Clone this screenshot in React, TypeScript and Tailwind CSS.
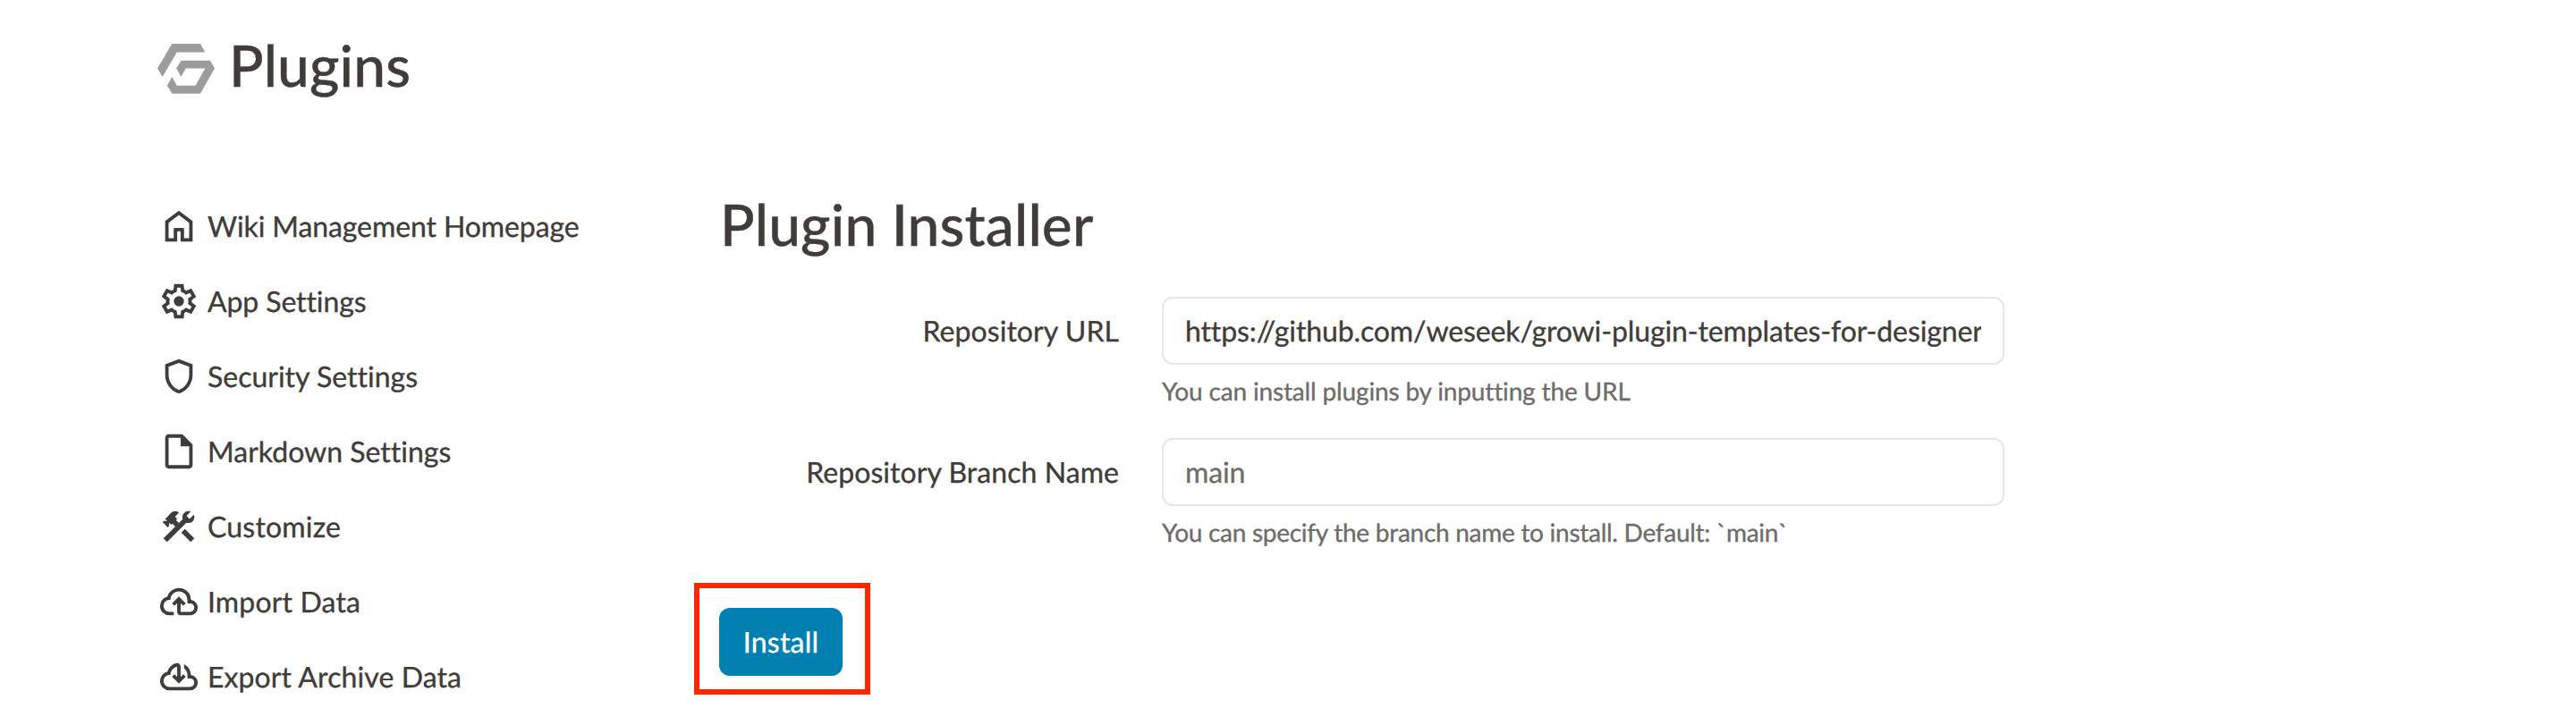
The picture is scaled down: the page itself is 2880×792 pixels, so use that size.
const ICONS = {
  home: "M240-200h120v-240h240v240h120v-360L480-740 240-560v360Zm-80 80v-480l320-240 320 240v480H520v-240h-80v240H160Z",
  settings:
    "m370-80-16-128q-13-5-24.5-12T307-235l-119 50L78-375l103-78q-1-7-1-13.5v-27q0-6.5 1-13.5L78-585l110-190 119 50q11-8 23-15t24-12l16-128h220l16 128q13 5 24.5 12t22.5 15l119-50 110 190-103 78q1 7 1 13.5v27q0 6.5-2 13.5l103 78-110 190-118-50q-11 8-23 15t-24 12L590-80H370Zm70-80h79l14-106q31-8 57.5-23.5T639-327l99 41 39-68-86-65q5-14 7-29.5t2-31.5q0-16-2-31.5t-7-29.5l86-65-39-68-99 42q-22-23-48.5-38.5T533-694l-13-106h-79l-14 106q-31 8-57.5 23.5T321-633l-99-41-39 68 86 64q-5 15-7 30t-2 32q0 16 2 31t7 30l-86 65 39 68 99-42q22 23 48.5 38.5T427-266l13 106Zm40-202q49 0 83.500-34.500T598-480q0-49-34.500-83.500T480-598q-49 0-83.500 34.500T362-480q0 49 34.500 83.500T480-362Z",
  shield:
    "M480-80q-139-35-229.5-159.5T160-516v-244l320-120 320 120v244q0 152-90.5 276.5T480-80Zm0-84q104-33 172-132t68-220v-189l-240-90-240 90v189q0 121 68 220t172 132Z",
  note: "M240-80q-33 0-56.5-23.5T160-160v-640q0-33 23.5-56.5T240-880h320l240 240v480q0 33-23.5 56.5T720-80H240Zm280-520v-200H240v640h480v-440H520Z",
  construction:
    "M756-120 537-339l84-84 219 219-84 84Zm-552 0-84-84 276-276-68-68-28 28-51-51v82l-28 28-121-121 28-28h82l-50-50 142-142q20-20 43-29t47-9q24 0 47 9t43 29l-92 92 50 50-28 28 68 68 90-90q-4-11-6.5-23t-2.5-24q0-59 40.5-99.5T701-841q15 0 28.5 3t27.5 9l-99 99 72 72 99-99q7 14 9.5 27.5T841-701q0 59-40.5 99.5T701-561q-12 0-24-2t-23-7L204-120Z",
  upload:
    "M260-160q-91 0-155.5-63T40-377q0-78 47-139t123-78q25-92 100-149t170-57q117 0 198.500 81.500T760-520q69 8 114.500 59.500T920-340q0 75-52.500 127.500T740-160H520q-33 0-56.500-23.500T440-240v-206l-64 62-56-56 160-160 160 160-56 56-64-62v206h220q42 0 71-29t29-71q0-42-29-71t-71-29h-60v-80q0-83-58.500-141.500T480-720q-83 0-141.500 58.500T280-520h-20q-58 0-99 41t-41 99q0 58 41 99t99 41h100v80H260Z",
  download:
    "M260-160q-91 0-155.5-63T40-377q0-78 47-139t123-78q17-72 85-137t145-65q33 0 56.500 23.500T520-716v242l64-62 56 56-160 160-160-160 56-56 64 62v-242q-76 14-118 73.500T280-520h-20q-58 0-99 41t-41 99q0 58 41 99t99 41h480q42 0 71-29t29-71q0-42-29-71t-71-29h-60v-80q0-48-22-89.500T600-680v-93q74 35 117 103.500T760-520q69 8 114.500 59.500T920-340q0 75-52.500 127.500T740-160H260Z",
};

const NAV: { icon: keyof typeof ICONS; label: string; tracking: string }[] = [
  { icon: "home", label: "Wiki Management Homepage", tracking: "tracking-[-0.1px]" },
  { icon: "settings", label: "App Settings", tracking: "tracking-[-0.1px]" },
  { icon: "shield", label: "Security Settings", tracking: "tracking-normal" },
  { icon: "note", label: "Markdown Settings", tracking: "tracking-normal" },
  { icon: "construction", label: "Customize", tracking: "tracking-[0.2px]" },
  { icon: "upload", label: "Import Data", tracking: "tracking-[0.15px]" },
  { icon: "download", label: "Export Archive Data", tracking: "tracking-[0.09px]" },
];

function Icon({ name }: { name: keyof typeof ICONS }) {
  return (
    <svg viewBox="0 -960 960 960" className="size-[46px] shrink-0 fill-current" aria-hidden="true">
      <path d={ICONS[name]} />
    </svg>
  );
}

function Logo() {
  return (
    <svg viewBox="0 0 64 56" className="h-14 w-16 shrink-0 fill-[#9d9c9b]" aria-hidden="true">
      <path d="M16.300 0H48l5.300 9.500H21.700L5.700 37 0 27.400Z" />
      <path d="M26.500 18.700H59l5 8.700L48 55.700H16.500L10.800 46.700 16.300 37l5.400 9.700H42.500L53.300 27.400H31.700L26.500 37l-5.300-9.600Z" />
    </svg>
  );
}

function Field(props: {
  id: string;
  label: string;
  help: string;
  helpTracking: string;
  value?: string;
  placeholder?: string;
}) {
  return (
    <div className="flex">
      <label htmlFor={props.id} className="mr-12 w-[446px] shrink-0 pt-[14px] text-right leading-[48px] tracking-[0.06px]">
        {props.label}
      </label>
      <div className="w-[942px]">
        <input
          id={props.id}
          type="text"
          defaultValue={props.value}
          placeholder={props.placeholder}
          className="block h-[76px] w-full rounded-xl border-2 border-[#e6e6e6] bg-white px-6 pb-px text-[32px] leading-[48px] tracking-[-0.12px] [text-rendering:geometricPrecision] placeholder:text-[#6f6d6b]"
        />
        <p className={`mt-2 text-[28px] leading-[42px] text-[#6f6d6b] ${props.helpTracking}`}>{props.help}</p>
      </div>
    </div>
  );
}

export default function App() {
  return (
    <div className="h-[792px] w-[2880px] overflow-hidden bg-white font-['Lato',sans-serif] text-[32px] leading-[48px] text-[#403c39] [-webkit-text-stroke:0.35px_currentColor] [font-variant-ligatures:none] [text-rendering:geometricPrecision]">
      <header className="flex items-center gap-4 pt-[40px] pl-44">
        <Logo />
        <h1 className="-mt-[6px] pb-[2px] text-[64px] leading-[77px] font-medium tracking-[0.15px]">Plugins</h1>
      </header>
      <div className="flex pt-[98px] pl-[177px]">
        <nav className="w-[628px] shrink-0">
          <ul>
            {NAV.map((item) => (
              <li key={item.label} className="flex h-[84px] items-center gap-[9px]">
                <Icon name={item.icon} />
                <span className={item.tracking}>{item.label}</span>
              </li>
            ))}
          </ul>
        </nav>
        <main className="pt-px">
          <h2 className="text-[64px] leading-[77px] font-medium tracking-[0.16px]">Plugin Installer</h2>
          <form className="mt-[43px] flex flex-col gap-8" onSubmit={(e) => e.preventDefault()}>
            <Field
              id="repository-url"
              label="Repository URL"
              help="You can install plugins by inputting the URL"
              helpTracking="tracking-[-0.15px]"
              value="https://github.com/weseek/growi-plugin-templates-for-designers"
            />
            <Field
              id="repository-branch"
              label="Repository Branch Name"
              help="You can specify the branch name to install. Default: `main`"
              helpTracking="tracking-[-0.27px]"
              placeholder="main"
            />
            <div className="mt-[4px] -ml-[29px] flex h-[125px] w-[197px] border-6 border-[#ff2600] pt-[22px] pl-[22px]">
              <button type="submit" className="h-[76px] w-[138px] rounded-xl bg-[#007fb1] text-[32px] leading-[48px] tracking-[0.2px] text-white [text-rendering:geometricPrecision]">
                Install
              </button>
            </div>
          </form>
        </main>
      </div>
    </div>
  );
}
